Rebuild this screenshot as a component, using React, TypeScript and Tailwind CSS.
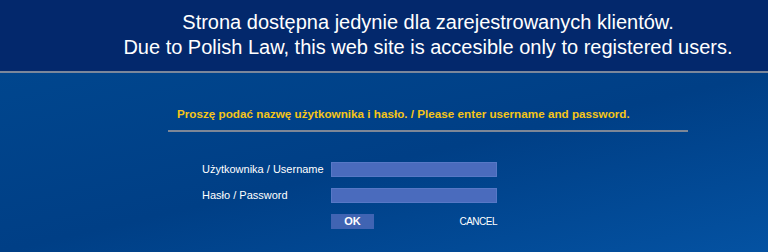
export default function App() {
  return (
    <main className="h-[252px] w-[768px] overflow-hidden font-['Liberation_Sans',Arial,sans-serif]">
      {/* top banner */}
      <header className="h-[71px] bg-[#03286c] pl-[88px] pt-[10px] text-center text-[20px] leading-[25px] text-white">
        <p>Strona dostępna jedynie dla zarejestrowanych klientów.</p>
        <p>Due to Polish Law, this web site is accesible only to registered users.</p>
      </header>
      <div className="h-[2px] bg-[#7b879b]"></div>

      <section className="h-[179px] bg-gradient-to-br from-[#00468e] via-[#003f86] to-[#0452a2] pt-[33px]">
        <div className="ml-[168px] w-[520px]">
          <p className="pl-[9px] text-[11.7px] font-bold leading-[16px] text-[#f5c518]">
            Proszę podać nazwę użytkownika i hasło. / Please enter username and password.
          </p>
          <div className="mt-[8px] h-[2px] bg-[#7d8797]"></div>

          {/* login form */}
          <div className="mt-[30px] ml-[34px] grid grid-cols-[129px_166px] gap-y-[11px] text-[11px] leading-[15px] text-white">
            <label className="self-center">Użytkownika / Username</label>
            <input type="text" className="h-[15px] border border-[#5778c6] bg-[#4a6bbd] outline-none" />
            <label className="self-center">Hasło / Password</label>
            <input type="password" className="h-[15px] border border-[#5778c6] bg-[#4a6bbd] outline-none" />
            <div></div>
            <div className="flex items-center justify-between">
              <button className="h-[15px] w-[43px] bg-[#4064b3] text-[11px] font-bold leading-[15px] text-white">OK</button>
              <button className="text-[10px] leading-[15px] tracking-[-0.5px] text-white">CANCEL</button>
            </div>
          </div>
        </div>
      </section>
    </main>
  );
}
